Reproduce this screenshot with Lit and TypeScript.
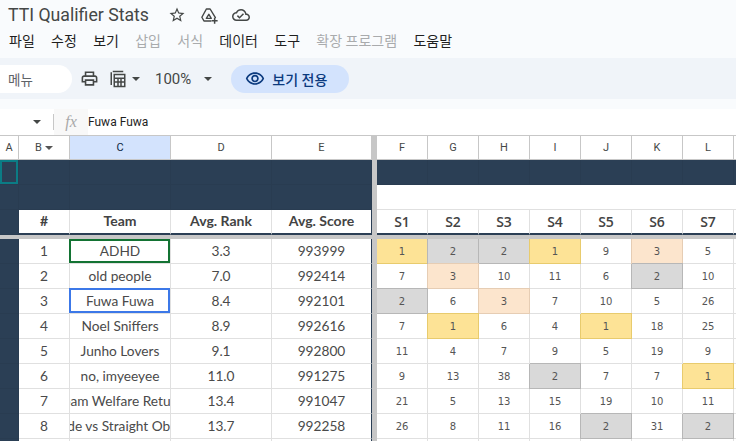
import { html, css, LitElement, svg } from 'lit';
import { customElement } from 'lit/decorators.js';

const MENU = [
	{ label: '파일' }, { label: '수정' }, { label: '보기' },
	{ label: '삽입', off: true }, { label: '서식', off: true },
	{ label: '데이터' }, { label: '도구' },
	{ label: '확장 프로그램', off: true }, { label: '도움말' },
];

const TEAMS: [string, string, string][] = [
	['ADHD', '3.3', '993999'],
	['old people', '7.0', '992414'],
	['Fuwa Fuwa', '8.4', '992101'],
	['Noel Sniffers', '8.9', '992616'],
	['Junho Lovers', '9.1', '992800'],
	['no, imyeeyee', '11.0', '991275'],
	['Team Welfare Return', '13.4', '991047'],
	['Side vs Straight Obse', '13.7', '992258'],
	['', '', ''],
];

const SCORES = [
	[1, 2, 2, 1, 9, 3, 5],
	[7, 3, 10, 11, 6, 2, 10],
	[2, 6, 3, 7, 10, 5, 26],
	[7, 1, 6, 4, 1, 18, 25],
	[11, 4, 7, 9, 5, 19, 9],
	[9, 13, 38, 2, 7, 7, 1],
	[21, 5, 13, 15, 19, 10, 11],
	[26, 8, 11, 16, 2, 31, 2],
];

const medal = (n: number) => (n === 1 ? 'gold' : n === 2 ? 'silver' : n === 3 ? 'bronze' : '');

const icon = (body: unknown, size = 18, vb = 24) => html`<svg width=${size} height=${size} viewBox="0 0 ${vb} ${vb}" fill="currentColor">${body}</svg>`;

const STAR = svg`<path d="M22 9.24l-7.19-.62L12 2 9.19 8.63 2 9.24l5.46 4.73L5.82 21 12 17.27 18.18 21l-1.63-7.03L22 9.24zM12 15.4l-3.76 2.27 1-4.28-3.32-2.88 4.38-.38L12 6.1l1.71 4.04 4.38.38-3.32 2.88 1 4.28L12 15.4z"/>`;
const DRIVE_ADD = svg`<g fill="none" stroke="currentColor" stroke-width="1.9" stroke-linejoin="round" stroke-linecap="round"><path d="M8.5 4h5l7 11.5M8.5 4 2.5 15l2.8 5h9.2M8.5 16.5l3.3-5.5 3.2 5.5z"/></g><path d="M18.5 15.5h2v3h3v2h-3v3h-2v-3h-3v-2h3z"/>`;
const CLOUD = svg`<path d="M19.35 10.04C18.67 6.59 15.64 4 12 4 9.11 4 6.6 5.64 5.35 8.04 2.34 8.36 0 10.91 0 14c0 3.31 2.69 6 6 6h13c2.76 0 5-2.24 5-5 0-2.64-2.05-4.78-4.65-4.96zM19 18H6c-2.21 0-4-1.79-4-4 0-2.05 1.53-3.76 3.56-3.97l1.07-.11.5-.95C8.08 7.14 9.94 6 12 6c2.62 0 4.88 1.86 5.39 4.43l.3 1.5 1.53.11c1.56.1 2.78 1.41 2.78 2.96 0 1.65-1.35 3-3 3zm-9-3.82l-2.09-2.09L6.5 13.5 10 17l6.01-6.01-1.41-1.41z"/>`;
const PRINT = svg`<path d="M19 8h-1V3H6v5H5c-1.66 0-3 1.34-3 3v6h4v4h12v-4h4v-6c0-1.66-1.34-3-3-3zM8 5h8v3H8V5zm8 12v2H8v-4h8v2zm2-2v-2H6v2H4v-4c0-.55.45-1 1-1h14c.55 0 1 .45 1 1v4h-2z"/>`;
const CALC = svg`<path d="M2 3h2v17H2zM5 1h14v2H5zM6 5h16v18H6zm2 2v3h12V7zm0 5v3h3v-3zm5 0v3h2v-3zm4 0v3h3v-3zM8 17v4h3v-4zm5 0v4h2v-4zm4 0v4h3v-4z" fill-rule="evenodd"/>`;
const EYE = svg`<path d="M12 6a9.77 9.77 0 0 1 8.82 5.5C19.17 14.87 15.79 17 12 17s-7.17-2.13-8.82-5.5A9.77 9.77 0 0 1 12 6m0-2C7 4 2.73 7.11 1 11.5 2.73 15.89 7 19 12 19s9.27-3.11 11-7.5C21.27 7.11 17 4 12 4zm0 5a2.5 2.5 0 0 1 0 5 2.5 2.5 0 0 1 0-5m0-2c-2.48 0-4.5 2.02-4.5 4.5S9.52 16 12 16s4.5-2.02 4.5-4.5S14.48 7 12 7z"/>`;

@customElement('app-root')
export class AppRoot extends LitElement {
	static styles = css`
    :host {
      display: block;
      width: 736px;
      height: 441px;
      overflow: hidden;
      background: #f9fbfd;
      font-family: Roboto, "Noto Sans CJK KR", sans-serif;
      color: #1f1f1f;
    }

    .title-row {
      height: 30px;
      display: flex;
      align-items: center;
      padding-left: 8px;
    }
    .title {
      font-size: 17.7px;
      color: #444746;
      width: 160px;
    }
    .title-icons {
      display: flex;
      gap: 14px;
      color: #444746;
    }
    .title-icons svg { display: block; }

    .menu-row {
      height: 20px;
      padding-bottom: 8px;
      display: flex;
      align-items: center;
      padding-left: 9px;
      gap: 16.3px;
      font-size: 14px;
    }
    .menu-row .off { color: #a9abad; }

    .toolbar {
      height: 41px;
      background: #f0f4f9;
      display: flex;
      align-items: center;
      color: #444746;
    }
    .search {
      width: 64px;
      height: 28px;
      padding-left: 8px;
      background: #fff;
      border-radius: 0 14px 14px 0;
      font-size: 13.5px;
      color: #5f6368;
      display: flex;
      align-items: center;
    }
    .tool { display: flex; align-items: center; }
    .tool svg { display: block; }
    .caret {
      width: 0;
      height: 0;
      border-left: 4px solid transparent;
      border-right: 4px solid transparent;
      border-top: 4px solid #444746;
    }
    .zoom { font-size: 15px; color: #444746; }
    .view-only {
      width: 118px;
      height: 28px;
      border-radius: 14px;
      background: #d3e3fd;
      display: flex;
      align-items: center;
      padding-left: 14px;
      box-sizing: border-box;
      gap: 7px;
      margin-left: 19px;
      color: #0b3a7e;
      font-size: 14px;
      font-weight: 500;
    }
    .view-only svg { display: block; }

    .gap { height: 10px; }
    .formula {
      height: 26px;
      background: #fff;
      display: flex;
      align-items: center;
      font-size: 12px;
      color: #1f1f1f;
    }
    .name-box {
      width: 53px;
      height: 100%;
      display: flex;
      align-items: center;
      justify-content: flex-end;
      padding-right: 12px;
      box-sizing: border-box;
    }
    .sep { width: 1px; height: 16px; background: #c7c7c7; }
    .fx {
      width: 34px;
      height: 100%;
      background: #f8f8f8;
      color: #a8a8a8;
      font: italic 16px "Liberation Serif", serif;
      display: flex;
      align-items: center;
      justify-content: center;
    }

    .sheet {
      height: 306px;
      box-sizing: border-box;
      border-top: 1px solid #c7c7c7;
      background: #fff;
      display: grid;
      grid-template-columns: 372px 5px 359px;
      grid-template-rows: 99px 4px 1fr;
      overflow: hidden;
    }
    .freeze { background: #c7c7c7; }

    .pane {
      display: grid;
      grid-auto-rows: 25px;
      overflow: hidden;
    }
    .pane.left { grid-template-columns: 19px 51px 101px 101px 100px; }
    .pane.right { grid-template-columns: repeat(8, 51px); }
    .pane > div {
      box-sizing: border-box;
      display: flex;
      align-items: center;
      justify-content: center;
      white-space: nowrap;
      overflow: hidden;
      border-right: 1px solid #e0e0e0;
      border-bottom: 1px solid #e0e0e0;
      min-width: 0;
    }

    .pane > .col {
      height: 24px;
      font-size: 11px;
      color: #444746;
      border-right-color: #c7c7c7;
      border-bottom-color: #c7c7c7;
      gap: 3px;
    }
    .top { grid-template-rows: 24px 25px 25px 25px; }
    .pane > .col.on { background: #d3e3fd; color: #0b1f3f; }
    .col-caret {
      width: 0;
      height: 0;
      border-left: 4px solid transparent;
      border-right: 4px solid transparent;
      border-top: 4px solid #555;
    }

    .pane > .dark {
      background: #2b3f55;
      border-right-color: #293c51;
      border-bottom-color: #293c51;
    }
    .pane > .blank {
      grid-column: 1 / -1;
    }

    .pane.left > div { font: 13.7px Lato, sans-serif; color: #4a4a4a; padding-bottom: 2px; }
    .pane.left > .col { font: 11px Roboto, sans-serif; color: #444746; padding-bottom: 0; }
    .pane.left > .col.on { color: #0b1f3f; }
    .pane.left > .head, .pane.right > .head {
      height: 25px;
      border-bottom: 2px solid #2b3f55;
    }
    .pane.left > .head { font: 700 14px Lato, sans-serif; color: #434343; }
    .pane.left > .edge { border-right: 1px solid #2b3f55; }
    .pane.right > div { font: 10px "DejaVu Sans", sans-serif; color: #555; }
    .pane.right > .col { font: 11px Roboto, sans-serif; color: #444746; }
    .pane.right > .head { font: 600 14px "Open Sans", sans-serif; color: #434343; }

    .pane.right > .gold {
      background: #fde396;
      border-color: #e8cb6d;
      box-shadow: -1px 0 0 #e8cb6d, 0 -1px 0 #e8cb6d;
    }
    .pane.right > .silver {
      background: #d9d9d9;
      border-color: #b7b7b7;
      box-shadow: -1px 0 0 #b7b7b7, 0 -1px 0 #b7b7b7;
    }
    .pane.right > .bronze {
      background: #fce5cd;
      border-color: #e6cdb4;
      box-shadow: -1px 0 0 #e6cdb4, 0 -1px 0 #e6cdb4;
    }

    .pane > .picked { position: relative; overflow: visible; z-index: 1; }
    .picked::after {
      content: "";
      position: absolute;
      box-sizing: border-box;
      pointer-events: none;
    }
    .picked.green::after { inset: 0 0 0 -1px; border: 2px solid #137333; }
    .picked.blue::after { inset: -1px 0 0 -1px; border: 2px solid #3c78e8; }
    .picked.teal::after { inset: 0; border: 2px solid #0b7c85; }
  `;

	render() {
		const leftCols = ['A', 'B', 'C', 'D', 'E'];
		const rightCols = ['F', 'G', 'H', 'I', 'J', 'K', 'L', ''];
		return html`
      <div class="title-row">
        <div class="title">TTI Qualifier Stats</div>
        <div class="title-icons">${icon(STAR)}${icon(DRIVE_ADD)}${icon(CLOUD)}</div>
      </div>
      <div class="menu-row">
        ${MENU.map(m => html`<div class=${m.off ? 'off' : ''}>${m.label}</div>`)}
      </div>
      <div class="toolbar">
        <div class="search">메뉴</div>
        <div class="tool" style="margin-left:8px">${icon(PRINT, 19)}</div>
        <div class="tool" style="margin-left:10px">${icon(CALC, 18)}</div>
        <div class="caret" style="margin-left:5px"></div>
        <div class="zoom" style="margin-left:15px">100%</div>
        <div class="caret" style="margin-left:13px"></div>
        <div class="view-only">${icon(EYE, 20)}<span>보기 전용</span></div>
      </div>
      <div class="gap"></div>
      <div class="formula">
        <div class="name-box"><div class="caret"></div></div>
        <div class="sep"></div>
        <div class="fx">fx</div>
        <div>Fuwa Fuwa</div>
      </div>
      <div class="sheet">
        <div class="pane left top">
          ${leftCols.map((c, i) => html`<div class="col ${c === 'C' ? 'on' : ''}">${c}${i === 1 ? html`<span class="col-caret"></span>` : ''}</div>`)}
          <div class="dark picked teal"></div>
          ${[0, 1, 2, 3].map(() => html`<div class="dark"></div>`)}
          ${[0, 1, 2, 3, 4].map(() => html`<div class="dark"></div>`)}
          <div class="dark"></div>
          <div class="head">#</div>
          <div class="head">Team</div>
          <div class="head">Avg. Rank</div>
          <div class="head edge">Avg. Score</div>
        </div>
        <div class="freeze"></div>
        <div class="pane right top">
          ${rightCols.map(c => html`<div class="col">${c}</div>`)}
          ${rightCols.map(() => html`<div class="dark"></div>`)}
          <div class="blank"></div>
          ${rightCols.map((_, i) => html`<div class="head">${i < 7 ? `S${i + 1}` : ''}</div>`)}
        </div>
        <div class="freeze"></div>
        <div class="freeze"></div>
        <div class="freeze"></div>
        <div class="pane left">
          ${TEAMS.map((t, i) => html`
            <div class="dark"></div>
            <div>${t[0] ? i + 1 : ''}</div>
            <div class="${i === 0 ? 'picked green' : i === 2 ? 'picked blue' : ''}">${t[0]}</div>
            <div>${t[1]}</div>
            <div class="edge">${t[2]}</div>
          `)}
        </div>
        <div class="freeze"></div>
        <div class="pane right">
          ${SCORES.map(row => html`
            ${row.map(n => html`<div class=${medal(n)}>${n}</div>`)}
            <div></div>
          `)}
          ${rightCols.map(() => html`<div></div>`)}
        </div>
      </div>
    `;
	}
}
